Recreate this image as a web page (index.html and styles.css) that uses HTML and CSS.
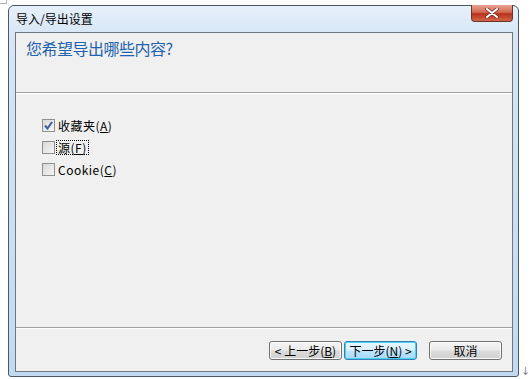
FILE: index.html
```html
<!DOCTYPE html>
<html lang="zh-CN">
<head>
    <meta charset="UTF-8">
    <title>导入/导出设置</title>
    <link rel="stylesheet" href="styles.css">
</head>
<body>
    <div class="window">
        <div class="titlebar">
            <span class="title">导入/导出设置</span>
            <button class="close" aria-label="关闭">
                <svg width="14" height="10" viewBox="0 0 14 10">
                    <path d="M2 1 L12 9 M12 1 L2 9" stroke="#6a2a22" stroke-width="3.4" stroke-linecap="round"/>
                    <path d="M2 1 L12 9 M12 1 L2 9" stroke="#ffffff" stroke-width="2" stroke-linecap="round"/>
                </svg>
            </button>
        </div>
        <div class="client">
            <div class="header">
                <h1>您希望导出哪些内容?</h1>
            </div>
            <div class="content">
                <label class="option">
                    <span class="box">
                        <svg width="9" height="9" viewBox="0 0 9 9">
                            <path d="M1 4.5 L3.5 7.5 L8 1" fill="none" stroke="#3c5fa0" stroke-width="2"/>
                        </svg>
                    </span>
                    <span class="text">收藏夹(<u>A</u>)</span>
                </label>
                <label class="option">
                    <span class="box"></span>
                    <span class="text focus">源(<u>F</u>)</span>
                </label>
                <label class="option">
                    <span class="box"></span>
                    <span class="text">Cookie(<u>C</u>)</span>
                </label>
            </div>
            <div class="footer">
                <button class="btn">&lt; 上一步(<u>B</u>)</button>
                <button class="btn default">下一步(<u>N</u>) &gt;</button>
                <button class="btn cancel">取消</button>
            </div>
        </div>
    </div>
    <span class="arrow">↓</span>
</body>
</html>
```
FILE: styles.css
```css
body {
    margin: 0;
    padding: 5px 0 0 8px;
    background-color: #ffffff;
    font-family: "Noto Sans CJK SC", "DejaVu Sans", sans-serif;
    font-size: 12px;
    position: relative;
    height: 374px;
}
body::before {
    content: "";
    position: absolute;
    left: 0;
    top: 0;
    width: 6px;
    height: 3px;
    border-right: 1px solid #b4b4b4;
    border-bottom: 1px solid #b4b4b4;
}
.window {
    border: 1px solid #4a5866;
    border-radius: 6px 6px 3px 3px;
    background: linear-gradient(to bottom, #e6f0fa 0%, #d6e6f5 30px, #c2daf0 100%);
    padding: 0 5px 4px 6px;
    box-sizing: border-box;
    width: 511px;
    height: 372px;
    display: flex;
    flex-direction: column;
}
.titlebar {
    height: 26px;
    display: flex;
    align-items: flex-start;
    justify-content: space-between;
}
.title {
    margin-top: 6px;
    margin-left: 1px;
    color: #000;
    font-size: 12px;
    line-height: 14px;
}
.close {
    width: 42px;
    height: 17px;
    margin-top: -1px;
    padding: 0;
    border: 1px solid #6b3328;
    border-top: none;
    border-radius: 0 0 4px 4px;
    background: linear-gradient(to bottom, #e8a493 0%, #d36a52 45%, #b8321c 55%, #d2664a 100%);
    display: flex;
    align-items: center;
    justify-content: center;
}
.client {
    flex: 1;
    border: 1px solid #6e7882;
    background-color: #f0f0f0;
    display: flex;
    flex-direction: column;
}
.header {
    height: 59px;
    border-bottom: 1px solid #a0a0a0;
    box-shadow: 0 1px 0 #ffffff;
}
h1 {
    margin: 3px 0 0 10px;
    font-size: 16px;
    font-weight: normal;
    color: #1f62ad;
    letter-spacing: -0.5px;
}
.content {
    flex: 1;
    padding: 25px 0 0 26px;
    margin-top: 1px;
    display: flex;
    flex-direction: column;
    gap: 9px;
    border-bottom: 1px solid #a0a0a0;
}
.option {
    display: flex;
    align-items: center;
    gap: 2px;
    height: 13px;
}
.box {
    width: 11px;
    height: 11px;
    border: 1px solid #8e8f8f;
    background: linear-gradient(135deg, #d8d8d8, #f6f6f6);
    display: flex;
    align-items: center;
    justify-content: center;
}
.text {
    line-height: 13px;
    padding: 0 1px;
    letter-spacing: 0.5px;
}
.focus {
    outline: 1px dotted #000;
}
.footer {
    height: 43px;
    border-top: 1px solid #ffffff;
    display: flex;
    justify-content: flex-end;
    align-items: flex-start;
    padding: 12px 10px 0 0;
    box-sizing: border-box;
}
.btn {
    height: 19px;
    width: 73px;
    padding: 0;
    font-family: "Noto Sans CJK SC", sans-serif;
    font-size: 12px;
    line-height: 15px;
    color: #000;
    border: 1px solid #707070;
    border-radius: 3px;
    background: linear-gradient(to bottom, #f4f4f4 0%, #eaeaea 48%, #dcdcdc 52%, #d0d0d0 100%);
    box-shadow: inset 0 0 0 1px #fbfbfb;
}
.default {
    margin-left: 2px;
    border-color: #3c7fb1;
    background: linear-gradient(to bottom, #eaf6fd 0%, #d9f0fc 48%, #bee6fd 52%, #a7d9f5 100%);
    box-shadow: inset 0 0 0 1px #48d0f8;
}
.cancel {
    margin-left: 12px;
}
.arrow {
    position: absolute;
    left: 521px;
    top: 364px;
    font-size: 9px;
    color: #555;
}
```
